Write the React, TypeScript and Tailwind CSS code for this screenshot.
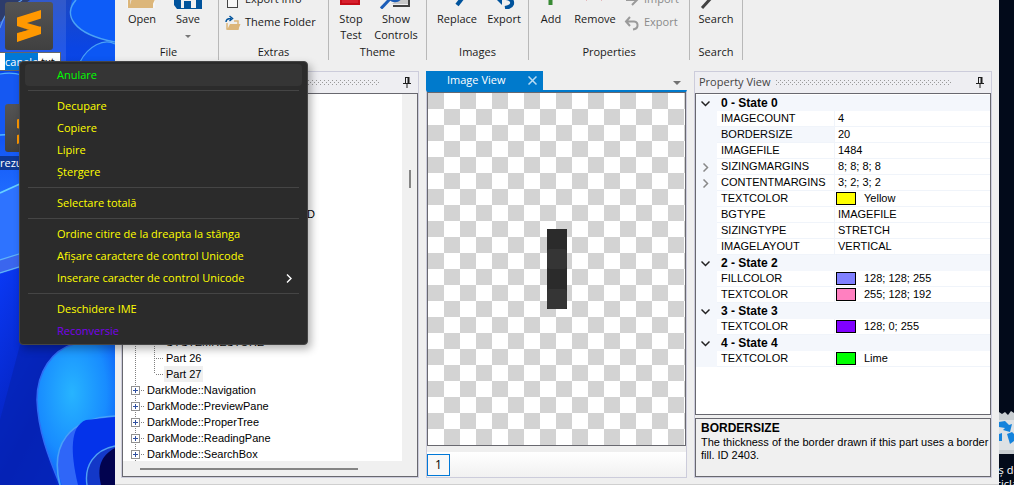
import type { ReactNode } from "react";

/* ---------- Desktop ---------- */

function Wallpaper() {
  return (
    <svg className="absolute inset-0 h-full w-[115px]" viewBox="0 0 115 485" preserveAspectRatio="none" aria-hidden="true">
      <defs>
        <linearGradient id="sky" x1="0" y1="0" x2="0" y2="1">
          <stop offset="0" stopColor="#1b47c4" />
          <stop offset="0.1" stopColor="#0a45e4" />
          <stop offset="0.22" stopColor="#0b48ee" />
          <stop offset="0.4" stopColor="#1f6cff" />
          <stop offset="1" stopColor="#0a2cd0" />
        </linearGradient>
        <linearGradient id="deep" x1="0" y1="0" x2="1" y2="1">
          <stop offset="0" stopColor="#0a39f5" />
          <stop offset="0.5" stopColor="#0420b8" />
          <stop offset="1" stopColor="#0630d8" />
        </linearGradient>
        <radialGradient id="petal" cx="0.45" cy="0.35" r="0.8">
          <stop offset="0" stopColor="#27b4ff" />
          <stop offset="0.55" stopColor="#188cff" />
          <stop offset="1" stopColor="#0a4af4" />
        </radialGradient>
      </defs>
      <rect width="115" height="485" fill="url(#sky)" />
      <path d="M0 0H30L0 22Z" fill="#16265a" />
      <path d="M72 0C66 18 76 34 115 42V0Z" fill="#0d5cf8" />
      <path d="M76 0C63 14 72 34 115 42" fill="none" stroke="#4aa2f5" strokeWidth="1.6" />
      <path d="M80 62C88 46 104 38 115 44V70H78Z" fill="#0c57f4" />
      <path d="M80 62C88 46 104 38 115 44" fill="none" stroke="#4aa2f5" strokeWidth="1.2" />
      <path d="M0 28C2 22 5 10 22 0" fill="none" stroke="#4a8ce8" strokeWidth="1.2" />
      <path d="M0 74Q12 72 22 75V140H0Z" fill="#1558f2" />
      <path d="M0 74Q12 72 22 75" fill="none" stroke="#50b0ff" strokeWidth="1.2" />
      <path d="M0 135L20 134" fill="none" stroke="#52b8ff" strokeWidth="1.4" />
      <path d="M0 193L22 183V262L0 270Z" fill="#2e73ff" />
      <path d="M0 193L22 183" fill="none" stroke="#67d0ff" strokeWidth="1.6" />
      <path d="M0 260L22 253V268L0 273Z" fill="#3b66ee" />
      <path d="M0 260L22 253M0 273L22 266" fill="none" stroke="#60b5f7" strokeWidth="1.2" />
      <path d="M0 274L22 267L115 345V485H0Z" fill="url(#deep)" />
      <path d="M20 345H66C46 358 37 380 37 400C38 430 48 462 57 485H0V420Z" fill="#0523b4" opacity="0.7" />
      <path d="M60 485C48 456 38 430 37 400C37 372 52 350 74 344H115V485Z" fill="url(#petal)" />
      <path d="M60 485C48 456 38 430 37 400C37 372 52 350 74 344" fill="none" stroke="#2f6df5" strokeWidth="1.5" />
      <path d="M62 485C50 452 62 418 115 416V485Z" fill="#2f66f8" />
      <path d="M60 485C50 446 68 418 115 416" fill="none" stroke="#48a2f8" strokeWidth="1.6" />
      <path d="M78 485C70 452 70 426 86 420L115 417V485Z" fill="#0433ea" />
      <path d="M87 485C84 466 94 450 115 446V485Z" fill="#1338c8" />
      <path d="M87 485C84 466 94 450 115 446" fill="none" stroke="#50a0f4" strokeWidth="1.4" />
      <path d="M101 485C97 468 100 456 115 448V485Z" fill="#02034f" />
    </svg>
  );
}

function SublimeIcon() {
  return (
    <svg className="block h-12 w-12" viewBox="0 0 48 48" aria-hidden="true">
      <defs>
        <linearGradient id="tile" x1="0" y1="0" x2="0" y2="1">
          <stop offset="0" stopColor="#545454" />
          <stop offset="1" stopColor="#404040" />
        </linearGradient>
      </defs>
      <rect width="48" height="48" rx="3" fill="url(#tile)" />
      <path d="M12 24L36 31L12 39.5V31L24 28Z" fill="#e08200" />
      <path d="M36 8V16.500L22 21L36 25V31.500L12 24V15.500Z" fill="#ff9800" />
      <path d="M36 24.500V32L12 40V31.500L25 27.500Z" fill="#ff9800" />
    </svg>
  );
}

function Desktop() {
  return (
    <div className="relative w-[115px] shrink-0 overflow-hidden bg-[#0a3ae0] text-[11px]">
      <Wallpaper />
      <div className="absolute top-0 left-0 h-[71px] w-[66px] bg-white/10" />
      <div className="absolute top-[2px] left-[5px]">
        <SublimeIcon />
      </div>
      <div className="absolute top-[52px] left-[-2px] flex h-[19px] w-[63px] items-center border border-[#666] bg-white pl-[6px] leading-[17px] whitespace-nowrap text-black">
        <span className="bg-[#0078d7] text-white">canale</span>
        <span>.txt</span>
      </div>
      <div className="absolute top-[104px] left-[5px]">
        <SublimeIcon />
      </div>
      <span className="absolute top-[156px] left-0 bg-black/40 leading-[14px] text-white">rezumat</span>
    </div>
  );
}

function RecycleStrip() {
  return (
    <div className="relative w-[15px] shrink-0 overflow-hidden bg-[#020a1a] text-[11px] text-white">
      <svg className="absolute top-[408px] left-0 h-12 w-[15px]" viewBox="0 0 15 48" aria-hidden="true">
        <path d="M0 4L3 6L6 4L9 7L12 3L15 5V46H0Z" fill="#c9ced2" />
        <path d="M0 12H15V42H0Z" fill="#dde1e4" />
        <path d="M0 14L6 13L10 17L13 16L11 24L4 22L6 20L0 19Z" fill="#1583dc" />
        <path d="M8 26L13 24L15 26V33L11 36Z" fill="#1583dc" />
        <path d="M0 26L3 25V33H0Z" fill="#1583dc" />
      </svg>
      <div className="absolute top-[463px] left-[-14px] leading-[14px] whitespace-nowrap">
        Coș de
        <br />
        reciclare
      </div>
    </div>
  );
}

/* ---------- Ribbon ---------- */

function Icon({ children }: { children: ReactNode }) {
  return (
    <svg className="block h-8 w-8 shrink-0" viewBox="0 0 32 32" fill="none" aria-hidden="true">
      {children}
    </svg>
  );
}

const icons = {
  open: (
    <Icon>
      <path d="M1 6H13L16 10H29V31H1Z" fill="#f5f5f5" />
      <path d="M2 8H12L15 12H27V31H2Z" fill="#dcb67a" />
      <path d="M5 15H26V22L22 29H4Z" fill="#efeff0" />
      <path d="M7 18H31L25 31H3Z" fill="#dcb67a" />
    </Icon>
  ),
  save: (
    <Icon>
      <path d="M2 3H26L30 7V32H5L2 28Z" fill="#00539c" />
      <path d="M8 3H24V15H8Z" fill="#f0eff1" />
      <path d="M9 22H24V31H9Z" fill="#f0eff1" />
      <path d="M12 24H19V31H12Z" fill="#00539c" />
    </Icon>
  ),
  stop: (
    <Icon>
      <rect x="5" y="8" width="20" height="20" fill="#c50b17" />
      <rect x="7" y="10" width="16" height="16" fill="#d71f2d" />
    </Icon>
  ),
  show: (
    <Icon>
      <path d="M6 5H29V29H13" stroke="#424242" strokeWidth="2" fill="#f0eff1" />
      <path d="M12 27H28V22H17Z" fill="#c8c8c8" />
      <circle cx="15" cy="17" r="7" stroke="#1c5db8" strokeWidth="2.500" fill="#f6f8fb" />
      <path d="M10 22L1 31.500" stroke="#1c5db8" strokeWidth="3" />
    </Icon>
  ),
  replace: (
    <Icon>
      <path d="M28 6L20 21" stroke="#00539c" strokeWidth="3" />
      <path d="M16 28L23 19" stroke="#00539c" strokeWidth="4" />
    </Icon>
  ),
  exportImage: (
    <Icon>
      <path d="M7 21L14 14V28Z" fill="#00539c" />
      <path d="M12 21H18Q25 22 24 27Q23 30 17 31" stroke="#00539c" strokeWidth="4" />
    </Icon>
  ),
  add: (
    <Icon>
      <path d="M15.500 4V28M4 15H27" stroke="#388a34" strokeWidth="4" />
    </Icon>
  ),
  remove: (
    <Icon>
      <path d="M6 5L24 22M24 5L6 22" stroke="#c50b17" strokeWidth="4" />
    </Icon>
  ),
  search: (
    <Icon>
      <circle cx="18" cy="12" r="8" stroke="#424242" strokeWidth="2.500" />
      <path d="M12 20L2 31" stroke="#424242" strokeWidth="3" />
    </Icon>
  ),
};

function LargeButton({ icon, lines, width, menu }: { icon: ReactNode; lines: string[]; width: string; menu?: boolean }) {
  return (
    <button className={`flex h-[66px] flex-col items-center ${width}`}>
      {icon}
      <span className="mt-[2px] leading-4">
        {lines.map((line) => (
          <span key={line} className="block whitespace-nowrap">
            {line}
          </span>
        ))}
      </span>
      {menu && (
        <svg className="mt-2 block h-[3px] w-[6px]" viewBox="0 0 6 3" aria-hidden="true">
          <path d="M0 0H6L3 3Z" fill="#777" />
        </svg>
      )}
    </button>
  );
}

function SmallButton({ icon, label, disabled }: { icon: ReactNode; label: string; disabled?: boolean }) {
  return (
    <button disabled={disabled} className="flex h-[23px] items-center gap-1 whitespace-nowrap disabled:text-[#8a8a8a]">
      {icon}
      {label}
    </button>
  );
}

function Group({ caption, width, children }: { caption: string; width: string; children: ReactNode }) {
  return (
    <section className={`flex shrink-0 flex-col justify-end border-r border-[#b8b8b8] ${width}`}>
      <div className="flex items-start">{children}</div>
      <h2 className="h-[18px] text-center leading-[17px]">{caption}</h2>
    </section>
  );
}

const undoArrow = (
  <svg className="h-4 w-4" viewBox="0 0 16 16" fill="none" stroke="#9a9a9a" strokeWidth="2" aria-hidden="true">
    <path d="M6 2L2 6.500L6 11M2 6.500H10Q14 7 13.500 11Q13 14 9 14.500" />
  </svg>
);
const redoArrow = (
  <svg className="h-4 w-4" viewBox="0 0 16 16" fill="none" stroke="#9a9a9a" strokeWidth="2" aria-hidden="true">
    <path d="M9 3L13 8L8 13M13 8H2" />
  </svg>
);
const checkSquare = (
  <svg className="h-4 w-4" viewBox="0 0 16 16" fill="none" aria-hidden="true">
    <rect x="2.500" y="3.500" width="10" height="12" fill="#f8f8f8" stroke="#444" />
  </svg>
);
const folderArrow = (
  <svg className="h-4 w-4" viewBox="0 0 16 16" fill="none" aria-hidden="true">
    <path d="M2 8V14H13V6H9" stroke="#dcb67a" strokeWidth="1.500" />
    <path d="M5 9H15.500L13 15H2Z" fill="#dcb67a" />
    <path d="M1 7Q1 3.500 6 3.500M4.500 1L7.500 3.500L4.500 6" stroke="#00539c" strokeWidth="1.500" />
  </svg>
);

function Ribbon() {
  return (
    <header className="flex h-[60px] text-[11px] text-[#1a1a1a]">
      <Group caption="File" width="w-[104px] pl-1">
        <LargeButton icon={icons.open} lines={["Open"]} width="w-[46px]" />
        <LargeButton icon={icons.save} lines={["Save"]} width="w-[46px]" menu />
      </Group>
      <Group caption="Extras" width="w-[110px]">
        <div className="flex h-[55px] flex-col pl-[6px]">
          <SmallButton icon={checkSquare} label="Export Info" />
          <SmallButton icon={folderArrow} label="Theme Folder" />
        </div>
      </Group>
      <Group caption="Theme" width="w-[98px]">
        <LargeButton icon={icons.stop} lines={["Stop", "Test"]} width="ml-[2px] w-[40px]" />
        <LargeButton icon={icons.show} lines={["Show", "Controls"]} width="w-[50px]" />
      </Group>
      <Group caption="Images" width="w-[102px]">
        <LargeButton icon={icons.replace} lines={["Replace"]} width="ml-[5px] w-[50px]" />
        <LargeButton icon={icons.exportImage} lines={["Export"]} width="w-[44px]" />
      </Group>
      <Group caption="Properties" width="w-[161px]">
        <LargeButton icon={icons.add} lines={["Add"]} width="ml-[3px] w-[38px]" />
        <LargeButton icon={icons.remove} lines={["Remove"]} width="w-[50px]" />
        <div className="flex flex-col self-end pb-[9px] pl-1">
          <SmallButton icon={redoArrow} label="Import" disabled />
          <SmallButton icon={undoArrow} label="Export" disabled />
        </div>
      </Group>
      <Group caption="Search" width="w-[53px]">
        <LargeButton icon={icons.search} lines={["Search"]} width="w-[52px]" />
      </Group>
    </header>
  );
}

/* ---------- Docked panels ---------- */

function Grip() {
  return (
    <svg className="h-[5px] min-w-0 flex-1" aria-hidden="true">
      <defs>
        <pattern id="grip" width="4" height="4" patternUnits="userSpaceOnUse">
          <rect width="1" height="1" fill="#999" />
          <rect x="2" y="2" width="1" height="1" fill="#999" />
        </pattern>
      </defs>
      <rect width="100%" height="5" fill="url(#grip)" />
    </svg>
  );
}

function PanelTitle({ title }: { title: string }) {
  return (
    <div className="flex h-[21px] shrink-0 items-center gap-[6px] bg-[#eeeef2] pr-[7px] pl-1 text-[#444]">
      <h2 className="text-[11px]">{title}</h2>
      <Grip />
      <button aria-label="Auto hide" className="ml-[18px]">
        <svg className="block h-3 w-2" viewBox="0 0 8 12" fill="none" aria-hidden="true">
          <path d="M2.500 0V6M2 .5H6M0 6.500H8M4 7V11" stroke="#1e1e1e" />
          <path d="M5.500 0V6" stroke="#1e1e1e" strokeWidth="2" />
        </svg>
      </button>
    </div>
  );
}

function TreeLines({ child, last }: { child?: boolean; last?: boolean }) {
  return (
    <svg
      className={child ? "h-4 w-[41px] shrink-0" : "h-4 w-[22px] shrink-0"}
      fill="none"
      stroke="#808080"
      strokeDasharray="1 1"
      aria-hidden="true"
    >
      <path d="M12.500 0V16" />
      {child && <path d={last ? "M31.500 0V8" : "M31.500 0V16"} />}
      {child ? (
        <path d="M33 8.500H40" />
      ) : (
        <>
          <path d="M18 8.500H22" />
          <rect x="8.500" y="4.500" width="8" height="8" fill="#fff" stroke="#919191" strokeDasharray="none" />
          <path d="M10 8.500H15M12.500 6V11" stroke="#3050a0" strokeDasharray="none" />
        </>
      )}
    </svg>
  );
}

const classes = ["Navigation", "PreviewPane", "ProperTree", "ReadingPane", "SearchBox"];

function ClassPanel() {
  return (
    <section className="flex w-[298px] shrink-0 flex-col border border-[#ccccdb] bg-[#efefef]">
      <PanelTitle title="" />
      <div className="flex min-h-0 flex-1 border border-[#68686f] bg-[#f0f0f0]">
        <div className="flex min-w-0 flex-1 flex-col">
          <ul className="min-h-0 flex-1 overflow-hidden bg-white font-['Liberation_Sans',Arial,sans-serif] text-[11px] leading-4 text-black">
            <li className="mt-28 mb-28 h-4 pl-[184px]">D</li>
            <li className="flex h-4">
              <TreeLines child />
              <span className="px-[2px]">SYSTEMRESTORE</span>
            </li>
            <li className="flex h-4">
              <TreeLines child />
              <span className="px-[2px]">Part 26</span>
            </li>
            <li className="flex h-4">
              <TreeLines child last />
              <span className="bg-[#f0f0f0] px-[2px]">Part 27</span>
            </li>
            {classes.map((name) => (
              <li key={name} className="flex h-4">
                <TreeLines />
                <span className="px-[2px]">DarkMode::{name}</span>
              </li>
            ))}
          </ul>
          <div className="flex h-[15px] shrink-0 items-center pr-11 pl-[17px]">
            <div className="h-[2px] flex-1 bg-[#858585]" />
          </div>
        </div>
        <div className="flex w-[15px] justify-center pt-[76px]">
          <div className="h-[18px] w-[2px] bg-[#858585]" />
        </div>
      </div>
    </section>
  );
}

function ImagePanel() {
  return (
    <section className="flex min-w-0 flex-1 flex-col">
      <div className="flex h-[19px] shrink-0 items-center justify-between pr-[6px]">
        <div className="flex h-[19px] w-[117px] items-center justify-between bg-[#007acc] pr-[6px] pl-[21px] text-[11px] text-white">
          <h2>Image View</h2>
          <button aria-label="Close">
            <svg className="block h-[9px] w-[9px]" viewBox="0 0 9 9" fill="none" stroke="#b9dcf3" strokeWidth="1.500" aria-hidden="true">
              <path d="M.5 .5L8.500 8.500M8.500 .5L.5 8.500" />
            </svg>
          </button>
        </div>
        <button aria-label="Window list">
          <svg className="mt-1 block h-1 w-2" viewBox="0 0 8 4" aria-hidden="true">
            <path d="M0 0H8L4 4Z" fill="#717171" />
          </svg>
        </button>
      </div>
      <div className="flex min-h-0 flex-1 flex-col border-x border-t-2 border-b border-x-[#ccccdb] border-t-[#007acc] border-b-[#ccccdb]">
        <div className="flex flex-1 items-center justify-center border border-[#68686f] bg-[conic-gradient(#fff_25%,#d3d3d3_0_50%,#fff_0_75%,#d3d3d3_0)] bg-[length:32px_32px]">
          <div className="w-5 bg-[#2b2b2b]">
            <div className="h-5 bg-[#2b2b2b]" />
            <div className="h-5 rounded-[3px] bg-[#353535]" />
            <div className="h-5 bg-[#2b2b2b]" />
            <div className="h-5 rounded-[3px] bg-[#353535]" />
          </div>
        </div>
        <div className="mt-[6px] flex h-[25px] shrink-0 items-center bg-linear-to-b from-white to-[#f1f1f1]">
          <button className="h-[22px] w-[23px] border border-[#0078d7] bg-[#f8f8f8] text-[12px] leading-5 text-black">1</button>
        </div>
      </div>
    </section>
  );
}

type Property = { name: string; value: string; swatch?: string; expandable?: boolean; selected?: boolean };

const states: { title: string; rows: Property[] }[] = [
  {
    title: "0 - State 0",
    rows: [
      { name: "IMAGECOUNT", value: "4" },
      { name: "BORDERSIZE", value: "20", selected: true },
      { name: "IMAGEFILE", value: "1484" },
      { name: "SIZINGMARGINS", value: "8; 8; 8; 8", expandable: true },
      { name: "CONTENTMARGINS", value: "3; 2; 3; 2", expandable: true },
      { name: "TEXTCOLOR", value: "Yellow", swatch: "bg-[#ffff00]" },
      { name: "BGTYPE", value: "IMAGEFILE" },
      { name: "SIZINGTYPE", value: "STRETCH" },
      { name: "IMAGELAYOUT", value: "VERTICAL" },
    ],
  },
  {
    title: "2 - State 2",
    rows: [
      { name: "FILLCOLOR", value: "128; 128; 255", swatch: "bg-[#8080ff]" },
      { name: "TEXTCOLOR", value: "255; 128; 192", swatch: "bg-[#ff80c0]" },
    ],
  },
  { title: "3 - State 3", rows: [{ name: "TEXTCOLOR", value: "128; 0; 255", swatch: "bg-[#8000ff]" }] },
  { title: "4 - State 4", rows: [{ name: "TEXTCOLOR", value: "Lime", swatch: "bg-[#00ff00]" }] },
];

function Chevron({ open }: { open?: boolean }) {
  return (
    <svg className="ml-[5px] block h-[9px] w-[9px]" viewBox="0 0 9 9" fill="none" strokeWidth="1.500" aria-hidden="true">
      {open ? <path d="M.5 2.500L4.500 6.500L8.500 2.500" stroke="#222" /> : <path d="M2.500 .5L6.500 4.500L2.500 8.500" stroke="#888" />}
    </svg>
  );
}

function PropertyPanel() {
  return (
    <section className="flex w-[298px] shrink-0 flex-col border border-[#ccccdb] bg-[#efefef]">
      <PanelTitle title="Property View" />
      <div className="min-h-0 flex-1 border border-[#68686f] bg-white pt-px font-['Liberation_Sans',Arial,sans-serif] text-[11px] text-black">
        <table className="w-full table-fixed border-separate border-spacing-0">
          <colgroup>
            <col className="w-[21px]" />
            <col className="w-[118px]" />
            <col />
          </colgroup>
          {states.map((state) => (
            <tbody key={state.title}>
              <tr className="h-4 bg-[#f4f7fc] leading-4">
                <td className="p-0">
                  <Chevron open />
                </td>
                <th colSpan={2} className="p-0 pl-1 text-left text-[12px] leading-4 font-bold">
                  {state.title}
                </th>
              </tr>
              {state.rows.map((row) => (
                <tr key={row.name} className="h-4 leading-[15px]">
                  <td className="bg-[#f4f7fc] p-0">{row.expandable && <Chevron />}</td>
                  <td className={`border-r border-b border-[#f0f4fa] p-0 pl-1 ${row.selected ? "bg-[#f4f7fc]" : ""}`}>{row.name}</td>
                  <td className="border-b border-[#f0f4fa] p-0">
                    <div className="flex items-center">
                      {row.swatch && <span className={`ml-px h-[13px] w-5 border border-black ${row.swatch}`} />}
                      <span className={row.swatch ? "pl-2" : "pl-[3px]"}>{row.value}</span>
                    </div>
                  </td>
                </tr>
              ))}
            </tbody>
          ))}
        </table>
      </div>
      <div className="mt-[3px] h-[59px] shrink-0 border border-[#68686f] bg-[#f0f0f0] pt-px pl-[5px] font-['Liberation_Sans',Arial,sans-serif] text-black">
        <h3 className="text-[12px] leading-4 font-bold">BORDERSIZE</h3>
        <p className="text-[11px] leading-[13px]">The thickness of the border drawn if this part uses a border fill. ID 2403.</p>
      </div>
    </section>
  );
}

/* ---------- Context menu ---------- */

type MenuItem = { label: string; tone?: string; submenu?: boolean };

const menuGroups: MenuItem[][] = [
  [{ label: "Anulare", tone: "bg-[#353535] text-[#00ff00]" }],
  [{ label: "Decupare" }, { label: "Copiere" }, { label: "Lipire" }, { label: "Ștergere" }],
  [{ label: "Selectare totală" }],
  [
    { label: "Ordine citire de la dreapta la stânga" },
    { label: "Afișare caractere de control Unicode" },
    { label: "Inserare caracter de control Unicode", submenu: true },
  ],
  [{ label: "Deschidere IME" }, { label: "Reconversie", tone: "text-[#7a00f0]" }],
];

function ContextMenu() {
  return (
    <div
      role="menu"
      className="absolute top-[61px] left-[19px] w-[289px] rounded-[4px] border border-[#454545] bg-[#2b2b2b] px-[5px] py-[2px] text-[11px] shadow-[3px_4px_8px_rgba(0,0,0,0.3)]"
    >
      {menuGroups.map((group, index) => (
        <div key={group[0].label}>
          {index > 0 && <hr className="mx-[3px] my-1 border-t border-[#454545]" />}
          {group.map((item) => (
            <button
              key={item.label}
              role="menuitem"
              className={`flex h-[22px] w-full items-center justify-between rounded-[4px] pr-[10px] pl-8 ${item.tone ?? "text-[#ffff00]"}`}
            >
              {item.label}
              {item.submenu && (
                <svg className="h-[9px] w-[6px]" viewBox="0 0 6 9" fill="none" stroke="#fff" strokeWidth="1.400" aria-hidden="true">
                  <path d="M1 .5L5 4.500L1 8.500" />
                </svg>
              )}
            </button>
          ))}
        </div>
      ))}
    </div>
  );
}

export default function App() {
  return (
    <div className="relative flex h-screen overflow-hidden font-['Open_Sans','Noto_Sans',sans-serif]">
      <Desktop />
      <main className="flex min-w-0 flex-1 flex-col border-b border-[#cfcfcf] bg-[#efefef]">
        <Ribbon />
        <div className="flex min-h-0 flex-1 gap-[7px] px-[6px] pt-[11px] pr-[7px] pb-[6px]">
          <ClassPanel />
          <ImagePanel />
          <PropertyPanel />
        </div>
      </main>
      <RecycleStrip />
      <ContextMenu />
    </div>
  );
}
